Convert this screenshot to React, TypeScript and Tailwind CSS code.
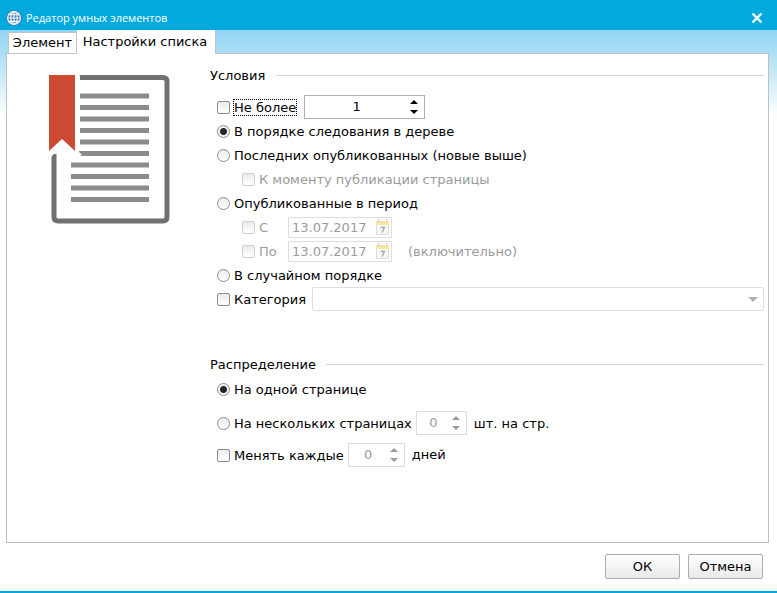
import { useId, useState } from "react";
import type { ReactNode } from "react";
import { clsx } from "clsx";

type ChoiceProps = {
  type: "checkbox" | "radio";
  children: ReactNode;
  name?: string;
  defaultChecked?: boolean;
  disabled?: boolean;
  focused?: boolean;
};

function Choice({ type, children, name, defaultChecked, disabled, focused }: ChoiceProps) {
  return (
    <label
      className={clsx(
        "flex h-6 shrink-0 items-center gap-[3px] whitespace-nowrap",
        disabled && "text-[#9b9b9b]",
      )}
    >
      <input
        type={type}
        name={name}
        defaultChecked={defaultChecked}
        disabled={disabled}
        className={clsx(
          "size-[13px] shrink-0 appearance-none border bg-linear-to-b from-[#ececec] to-white",
          disabled ? "border-[#cfcfcf]" : "border-[#8c8c8c]",
          type === "radio"
            ? "rounded-full checked:bg-[radial-gradient(circle,#262626_0,#262626_3px,#f4f4f4_4px)]"
            : "rounded-[2px] checked:bg-[#262626] checked:bg-none",
        )}
      />
      <span
        className={clsx(
          "border border-dotted pt-px leading-[14px]",
          focused ? "border-black" : "border-transparent",
        )}
      >
        {children}
      </span>
    </label>
  );
}

type StepperProps = { label: string; initial: number; disabled?: boolean; className: string };

function Stepper({ label, initial, disabled, className }: StepperProps) {
  const [value, setValue] = useState(initial);
  return (
    <div
      className={clsx(
        "flex h-6 shrink-0 border bg-white",
        disabled ? "border-[#dcdcdc] text-[#9b9b9b]" : "border-[#b0b0b0]",
        className,
      )}
    >
      <input
        type="text"
        inputMode="numeric"
        aria-label={label}
        value={value}
        onChange={(e) => setValue(Number(e.target.value) || 0)}
        disabled={disabled}
        className="w-0 min-w-0 flex-1 bg-transparent pl-1 text-center outline-none"
      />
      <div className="flex w-5 flex-col justify-center gap-[6px]">
        <button type="button" aria-label="Больше" disabled={disabled} onClick={() => setValue(value + 1)}>
          <svg className="mx-auto block" width="8" height="4" viewBox="0 0 8 4" fill="currentColor">
            <path d="M4 0 8 4H0Z" />
          </svg>
        </button>
        <button type="button" aria-label="Меньше" disabled={disabled} onClick={() => setValue(value - 1)}>
          <svg className="mx-auto block" width="8" height="4" viewBox="0 0 8 4" fill="currentColor">
            <path d="M0 0H8L4 4Z" />
          </svg>
        </button>
      </div>
    </div>
  );
}

function DateField({ label }: { label: string }) {
  return (
    <div className="flex h-[21px] w-[104px] items-center border border-[#dedede] pl-[3px] text-[#9b9b9b]">
      <input
        type="text"
        aria-label={label}
        defaultValue="13.07.2017"
        disabled
        className="w-0 min-w-0 flex-1 bg-transparent pt-px"
      />
      <button type="button" aria-label="Календарь" disabled className="mr-px">
        <svg className="block" width="15" height="17" viewBox="0 0 15 17">
          <path d="M1.500 3.500H13.500V15.500H1.500Z" fill="#f7f7f7" stroke="#dddddd" />
          <path d="M1 2H14V6H1Z" fill="#f8e2ae" />
          <path d="M3.500 0V3M11.500 0V3" stroke="#cfcabd" />
          <path d="M5.500 8.500H9.500L7 13.500" fill="none" stroke="#a5a5a5" strokeWidth="1.300" />
        </svg>
      </button>
    </div>
  );
}

function Heading({ children }: { children: ReactNode }) {
  return (
    <h2 className="flex h-6 items-center gap-2.5">
      <span className="pt-px">{children}</span>
      <span className="h-px flex-1 bg-[#d6d6d6]" />
    </h2>
  );
}

function GlobeIcon() {
  return (
    <svg width="16" height="16" viewBox="0 0 16 16" fill="none">
      <circle cx="8" cy="8" r="7.800" fill="#3d6fae" />
      <circle cx="8" cy="8" r="6.400" fill="#4279b8" stroke="#eef5fb" strokeWidth="1.300" />
      <ellipse cx="8" cy="8" rx="3.200" ry="6.400" stroke="#eef5fb" strokeWidth="1.200" />
      <path d="M8 1.600V14.400M1.600 8H14.400M2.600 4.600H13.400M2.600 11.400H13.400" stroke="#eef5fb" strokeWidth="1.200" />
    </svg>
  );
}

function DocumentIcon() {
  return (
    <svg width="122" height="150" viewBox="0 0 122 150">
      <path
        d="M31 2.500H114Q118 2.500 118 6.500V142Q118 146 114 146H9Q5 146 5 142V79"
        fill="none"
        stroke="#717171"
        strokeWidth="5"
      />
      <path
        d="M31 21H100M31 32.500H100M31 44H100M31 55.500H100M31 67H100M30 78.500H100M22 90H100M22 101.500H100M22 113H100M22 124.500H100"
        stroke="#8b8b8b"
        strokeWidth="5"
      />
      <path d="M0 0H26V76L13 64L0 76Z" fill="#cc4a32" />
      <path d="M0 76 8 76 0 84Z" fill="#fff" />
      <path d="M27 74 33 80 28 82Z" fill="#fff" />
    </svg>
  );
}

const pushButton =
  "h-[25px] w-[75px] rounded-[2px] border border-[#adadad] bg-linear-to-b from-white to-[#e9e9e9]";

export default function App() {
  const categoryId = useId();
  return (
    <div className="flex min-h-screen flex-col bg-white font-['DejaVu_Sans',Verdana,sans-serif] text-[13px] text-black">
      <header className="flex h-[30px] shrink-0 items-center bg-[#02a9dc] pt-[6px] pr-[14px] pl-[6px] text-white">
        <GlobeIcon />
        <h1 className="ml-1 flex-1 pt-px font-['Open_Sans',sans-serif] text-[11px]">Редатор умных элементов</h1>
        <button type="button" aria-label="Закрыть">
          <svg className="block" width="12" height="12" viewBox="0 0 12 12" stroke="currentColor" strokeWidth="2.400">
            <path d="M1.500 1.500 10.500 10.500M10.500 1.500 1.500 10.500" />
          </svg>
        </button>
      </header>

      <main className="flex flex-1 flex-col bg-[linear-gradient(#92d3f2_0,#addff5_24px,#ffffff_86px)] pr-2 pl-[6px]">
        <div role="tablist" className="z-10 -mb-px flex items-end pl-[2px]">
          <button
            type="button"
            role="tab"
            aria-selected="false"
            className="h-[22px] w-[68px] border border-r-0 border-[#c3c3c3] bg-white"
          >
            Элемент
          </button>
          <button
            type="button"
            role="tab"
            aria-selected="true"
            className="h-6 w-[140px] border-x border-[#c3c3c3] bg-white pr-0.5"
          >
            Настройки списка
          </button>
        </div>

        <div role="tabpanel" className="flex flex-1 border border-[#bfbfbf] bg-white pt-[9px]">
          <div className="w-[203px] shrink-0 pt-3 pl-[42px]">
            <DocumentIcon />
          </div>
          <form className="min-w-0 flex-1 pr-1">
            <section>
              <Heading>Условия</Heading>
              <div className="mt-2 pl-[7px]">
                <div className="flex items-center gap-[7px]">
                  <Choice type="checkbox" focused>
                    Не более
                  </Choice>
                  <Stepper label="Не более" initial={1} className="w-[121px]" />
                </div>
                <Choice type="radio" name="order" defaultChecked>
                  В порядке следования в дереве
                </Choice>
                <Choice type="radio" name="order">
                  Последних опубликованных (новые выше)
                </Choice>
                <div className="pl-[25px]">
                  <Choice type="checkbox" disabled>
                    К моменту публикации страницы
                  </Choice>
                </div>
                <Choice type="radio" name="order">
                  Опубликованные в период
                </Choice>
                <div className="grid grid-cols-[46px_104px_1fr] items-center pl-[25px]">
                  <Choice type="checkbox" disabled>
                    С
                  </Choice>
                  <DateField label="С" />
                  <span />
                  <Choice type="checkbox" disabled>
                    По
                  </Choice>
                  <DateField label="По" />
                  <span className="pt-0.5 pl-4 text-[#9b9b9b]">(включительно)</span>
                </div>
                <Choice type="radio" name="order">
                  В случайном порядке
                </Choice>
                <div className="flex items-center gap-[5px]">
                  <Choice type="checkbox">Категория</Choice>
                  <div className="grid flex-1 items-center">
                    <select
                      id={categoryId}
                      aria-label="Категория"
                      disabled
                      className="col-start-1 row-start-1 h-6 w-full appearance-none rounded-[2px] border border-[#dedede] bg-white"
                    />
                    <svg
                      className="pointer-events-none col-start-1 row-start-1 mr-[6px] justify-self-end"
                      width="10"
                      height="5"
                      viewBox="0 0 10 5"
                    >
                      <path d="M0 0H10L5 5Z" fill="#b0b0b0" />
                    </svg>
                  </div>
                </div>
              </div>
            </section>

            <section className="mt-[41px]">
              <Heading>Распределение</Heading>
              <div className="mt-px pl-[7px]">
                <Choice type="radio" name="pages" defaultChecked>
                  На одной странице
                </Choice>
                <div className="mt-[10px] flex items-center gap-[3px]">
                  <Choice type="radio" name="pages">
                    На нескольких страницах
                  </Choice>
                  <Stepper label="Штук на странице" initial={0} disabled className="w-[51px]" />
                  <span className="pt-px pl-1">шт. на стр.</span>
                </div>
                <div className="mt-2 flex items-center gap-[3px]">
                  <Choice type="checkbox">Менять каждые</Choice>
                  <Stepper label="Менять каждые, дней" initial={0} disabled className="w-[57px]" />
                  <span className="pl-1">дней</span>
                </div>
              </div>
            </section>
          </form>
        </div>

        <footer className="flex justify-end gap-2 pt-[11px] pr-[6px] pb-3">
          <button type="button" className={pushButton}>
            ОК
          </button>
          <button type="button" className={pushButton}>
            Отмена
          </button>
        </footer>
      </main>
      <div className="h-[2px] bg-[#02a9dc]" />
    </div>
  );
}
